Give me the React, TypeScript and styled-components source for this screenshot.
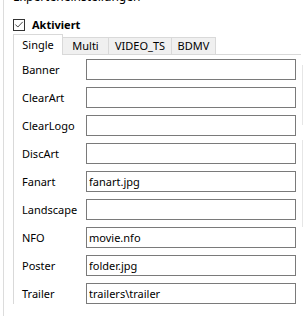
import styled, { createGlobalStyle } from 'styled-components';

const GlobalStyle = createGlobalStyle`
  html, body {
    margin: 0;
    padding: 0;
    background: #ffffff;
    overflow: hidden;
  }
  body {
    font-family: 'Noto Sans', 'Liberation Sans', sans-serif;
    font-size: 11px;
    color: #000000;
  }
`;

const fields = [
  { label: 'Banner', value: '' },
  { label: 'ClearArt', value: '' },
  { label: 'ClearLogo', value: '' },
  { label: 'DiscArt', value: '' },
  { label: 'Fanart', value: 'fanart.jpg' },
  { label: 'Landscape', value: '' },
  { label: 'NFO', value: 'movie.nfo' },
  { label: 'Poster', value: 'folder.jpg' },
  { label: 'Trailer', value: 'trailers\\trailer' },
];

const tabs = [
  { name: 'Single', width: 50 },
  { name: 'Multi', width: 46 },
  { name: 'VIDEO_TS', width: 63 },
  { name: 'BDMV', width: 44 },
];

export default function App() {
  return (
    <>
      <GlobalStyle />
      <Page>
        <GroupBox>
          <GroupTitle>Experteneinstellungen</GroupTitle>
          <CheckRow>
            <CheckBox>
              <svg width="11" height="11" viewBox="0 0 11 11">
                <path d="M1.5 5.5 L4.2 8.3 L9.6 2.6" fill="none" stroke="#333" strokeWidth="1" />
              </svg>
            </CheckBox>
            <CheckLabel>Aktiviert</CheckLabel>
          </CheckRow>
          <TabStrip>
            {tabs.map((t, i) => (
              <Tab key={t.name} $active={i === 0} $width={t.width}>
                {t.name}
              </Tab>
            ))}
          </TabStrip>
          <TabPanel>
            {fields.map((f) => (
              <FieldRow key={f.label}>
                <FieldLabel>{f.label}</FieldLabel>
                <FieldInput readOnly defaultValue={f.value} />
              </FieldRow>
            ))}
          </TabPanel>
        </GroupBox>
        <Sliver>
          <SliverEdge $height={60} />
          <SliverEdge $height={87} />
        </Sliver>
      </Page>
    </>
  );
}

const Page = styled.div`
  display: flex;
  width: 304px;
  height: 316px;
  overflow: hidden;
`;

const GroupBox = styled.div`
  width: 297px;
  margin-left: 3px;
  margin-top: -11px;
  padding-left: 9px;
  border-left: 1px solid #dcdcdc;
  box-sizing: border-box;
  flex-shrink: 0;
`;

const GroupTitle = styled.div`
  height: 16px;
  line-height: 16px;
  font-size: 12px;
  color: #000;
`;

const CheckRow = styled.div`
  display: flex;
  align-items: center;
  height: 17px;
  margin-top: 11px;
`;

const CheckBox = styled.div`
  width: 12px;
  height: 12px;
  box-sizing: border-box;
  border: 1px solid #333333;
  display: flex;
  align-items: center;
  justify-content: center;
  background: #fff;
`;

const CheckLabel = styled.span`
  font-weight: bold;
  margin-left: 7px;
`;

const TabStrip = styled.div`
  display: flex;
  align-items: flex-end;
  height: 21px;
  margin-top: 1px;
  position: relative;
  z-index: 1;
`;

const Tab = styled.div<{ $active: boolean; $width: number }>`
  width: ${(p) => p.$width}px;
  height: ${(p) => (p.$active ? 21 : 18)}px;
  box-sizing: border-box;
  border: 1px solid #d9d9d9;
  border-bottom: ${(p) => (p.$active ? 'none' : '1px solid #d9d9d9')};
  border-left: ${(p) => (p.$active ? '1px solid #d9d9d9' : 'none')};
  background: ${(p) => (p.$active ? '#ffffff' : '#f0f0f0')};
  display: flex;
  align-items: center;
  justify-content: center;
  padding-bottom: ${(p) => (p.$active ? 1 : 0)}px;
  line-height: 16px;
  flex-shrink: 0;
`;

const TabPanel = styled.div`
  margin-top: -1px;
  width: 287px;
  border-top: 1px solid #d9d9d9;
  border-left: 1px solid #d9d9d9;
  padding-top: 4px;
  display: flex;
  flex-direction: column;
  gap: 7px;
`;

const FieldRow = styled.div`
  display: flex;
  align-items: center;
  height: 21px;
  padding-left: 8px;
`;

const FieldLabel = styled.span`
  width: 64px;
  flex-shrink: 0;
`;

const FieldInput = styled.input`
  width: 210px;
  height: 21px;
  box-sizing: border-box;
  border: 1px solid #7a7a7a;
  padding: 0 2px;
  margin: 0;
  font-family: 'Noto Sans', 'Liberation Sans', sans-serif;
  font-size: 11px;
  color: #000;
  background: #fff;
  outline: none;
`;

const Sliver = styled.div`
  margin-left: 2px;
  padding-top: 65px;
  display: flex;
  flex-direction: column;
  gap: 15px;
`;

const SliverEdge = styled.div<{ $height: number }>`
  height: ${(p) => p.$height}px;
  border-left: 1px solid #e6e6e6;
`;
